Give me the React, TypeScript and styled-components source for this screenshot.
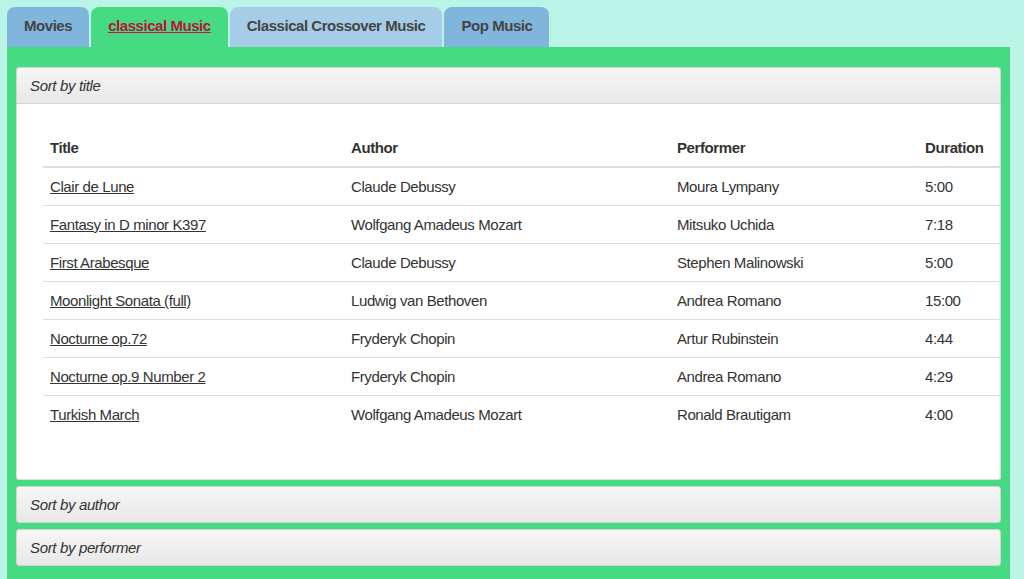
import React, { useState } from 'react';
import styled, { createGlobalStyle, css } from 'styled-components';

const GlobalStyle = createGlobalStyle`
  html, body {
    margin: 0;
    padding: 0;
    background: #b9f4e6;
    font-family: 'Liberation Sans', Arial, sans-serif;
    overflow: hidden;
  }
`;

const StyledPage = styled.div`
  padding: 7px 14px 0 7px;
  height: 579px;
  box-sizing: border-box;
`;

const StyledTabBar = styled.ul`
  display: flex;
  gap: 2px;
  list-style: none;
  margin: 0;
  padding: 0;
`;

const StyledTab = styled.li<{ $tone: 'blue' | 'light' | 'active' }>`
  height: 40px;
  box-sizing: border-box;
  padding: 0 17px 3px 17px;
  display: flex;
  align-items: center;
  border-radius: 8px 8px 0 0;
  font-size: 15px;
  font-weight: 700;
  letter-spacing: -0.45px;
  color: #444;
  background: #81b6dc;
  ${(p) =>
    p.$tone === 'light' &&
    css`
      background: #a6cde8;
    `}
  ${(p) =>
    p.$tone === 'active' &&
    css`
      background: #46db82;
      color: #b8123f;
      text-decoration: underline;
    `}
`;

const StyledPanel = styled.div`
  background: #46db82;
  padding: 20px 9px 20px 9px;
  display: flex;
  flex-direction: column;
  gap: 6px;
`;

const StyledSection = styled.div``;

const StyledHeader = styled.h3<{ $open?: boolean }>`
  margin: 0;
  height: 37px;
  box-sizing: border-box;
  display: flex;
  align-items: center;
  padding: 0 13px;
  font-size: 15px;
  font-weight: 400;
  font-style: italic;
  letter-spacing: -0.35px;
  color: #333;
  background: linear-gradient(#f6f6f6, #e8e8e8);
  border: 1px solid #d3d3d3;
  border-radius: ${(p) => (p.$open ? '3px 3px 0 0' : '3px')};
`;

const StyledContent = styled.div`
  background: #fff;
  border: 1px solid #ddd;
  border-top: none;
  border-radius: 0 0 3px 3px;
  padding: 28px 0 46px 26px;
`;

const StyledTable = styled.table`
  width: 100%;
  table-layout: fixed;
  border-collapse: collapse;
  font-size: 15px;
  letter-spacing: -0.4px;
  color: #333;
`;

const StyledTh = styled.th<{ $w: number }>`
  text-align: left;
  font-weight: 700;
  padding: 7px 7px 10px 7px;
  width: ${(p) => p.$w}px;
  border-bottom: 2px solid #ddd;
  white-space: nowrap;
`;

const StyledTd = styled.td`
  padding: 0 7px;
  height: 37px;
  border-bottom: 1px solid #ddd;
  white-space: nowrap;
`;

const StyledRow = styled.tr`
  &:last-child td {
    border-bottom: none;
  }
`;

const StyledLink = styled.a`
  color: #333;
  text-decoration: underline;
`;

const tabs = [
  { name: 'Movies', tone: 'blue' as const },
  { name: 'classical Music', tone: 'active' as const },
  { name: 'Classical Crossover Music', tone: 'light' as const },
  { name: 'Pop Music', tone: 'blue' as const },
];

const pieces = [
  ['Clair de Lune', 'Claude Debussy', 'Moura Lympany', '5:00'],
  ['Fantasy in D minor K397', 'Wolfgang Amadeus Mozart', 'Mitsuko Uchida', '7:18'],
  ['First Arabesque', 'Claude Debussy', 'Stephen Malinowski', '5:00'],
  ['Moonlight Sonata (full)', 'Ludwig van Bethoven', 'Andrea Romano', '15:00'],
  ['Nocturne op.72', 'Fryderyk Chopin', 'Artur Rubinstein', '4:44'],
  ['Nocturne op.9 Number 2', 'Fryderyk Chopin', 'Andrea Romano', '4:29'],
  ['Turkish March', 'Wolfgang Amadeus Mozart', 'Ronald Brautigam', '4:00'],
];

const App = () => {
  const [open] = useState(0);
  const sections = ['Sort by title', 'Sort by author', 'Sort by performer'];

  return (
    <>
      <GlobalStyle />
      <StyledPage>
        <StyledTabBar>
          {tabs.map((t) => (
            <StyledTab key={t.name} $tone={t.tone}>
              {t.name}
            </StyledTab>
          ))}
        </StyledTabBar>
        <StyledPanel>
          {sections.map((s, i) => (
            <StyledSection key={s}>
              <StyledHeader $open={open === i}>{s}</StyledHeader>
              {open === i ? (
                <StyledContent>
                  <StyledTable>
                    <thead>
                      <tr>
                        <StyledTh $w={287}>Title</StyledTh>
                        <StyledTh $w={312}>Author</StyledTh>
                        <StyledTh $w={234}>Performer</StyledTh>
                        <StyledTh $w={68}>Duration</StyledTh>
                      </tr>
                    </thead>
                    <tbody>
                      {pieces.map((p) => (
                        <StyledRow key={p[0]}>
                          <StyledTd>
                            <StyledLink href="#">{p[0]}</StyledLink>
                          </StyledTd>
                          <StyledTd>{p[1]}</StyledTd>
                          <StyledTd>{p[2]}</StyledTd>
                          <StyledTd>{p[3]}</StyledTd>
                        </StyledRow>
                      ))}
                    </tbody>
                  </StyledTable>
                </StyledContent>
              ) : null}
            </StyledSection>
          ))}
        </StyledPanel>
      </StyledPage>
    </>
  );
};

export default App;
